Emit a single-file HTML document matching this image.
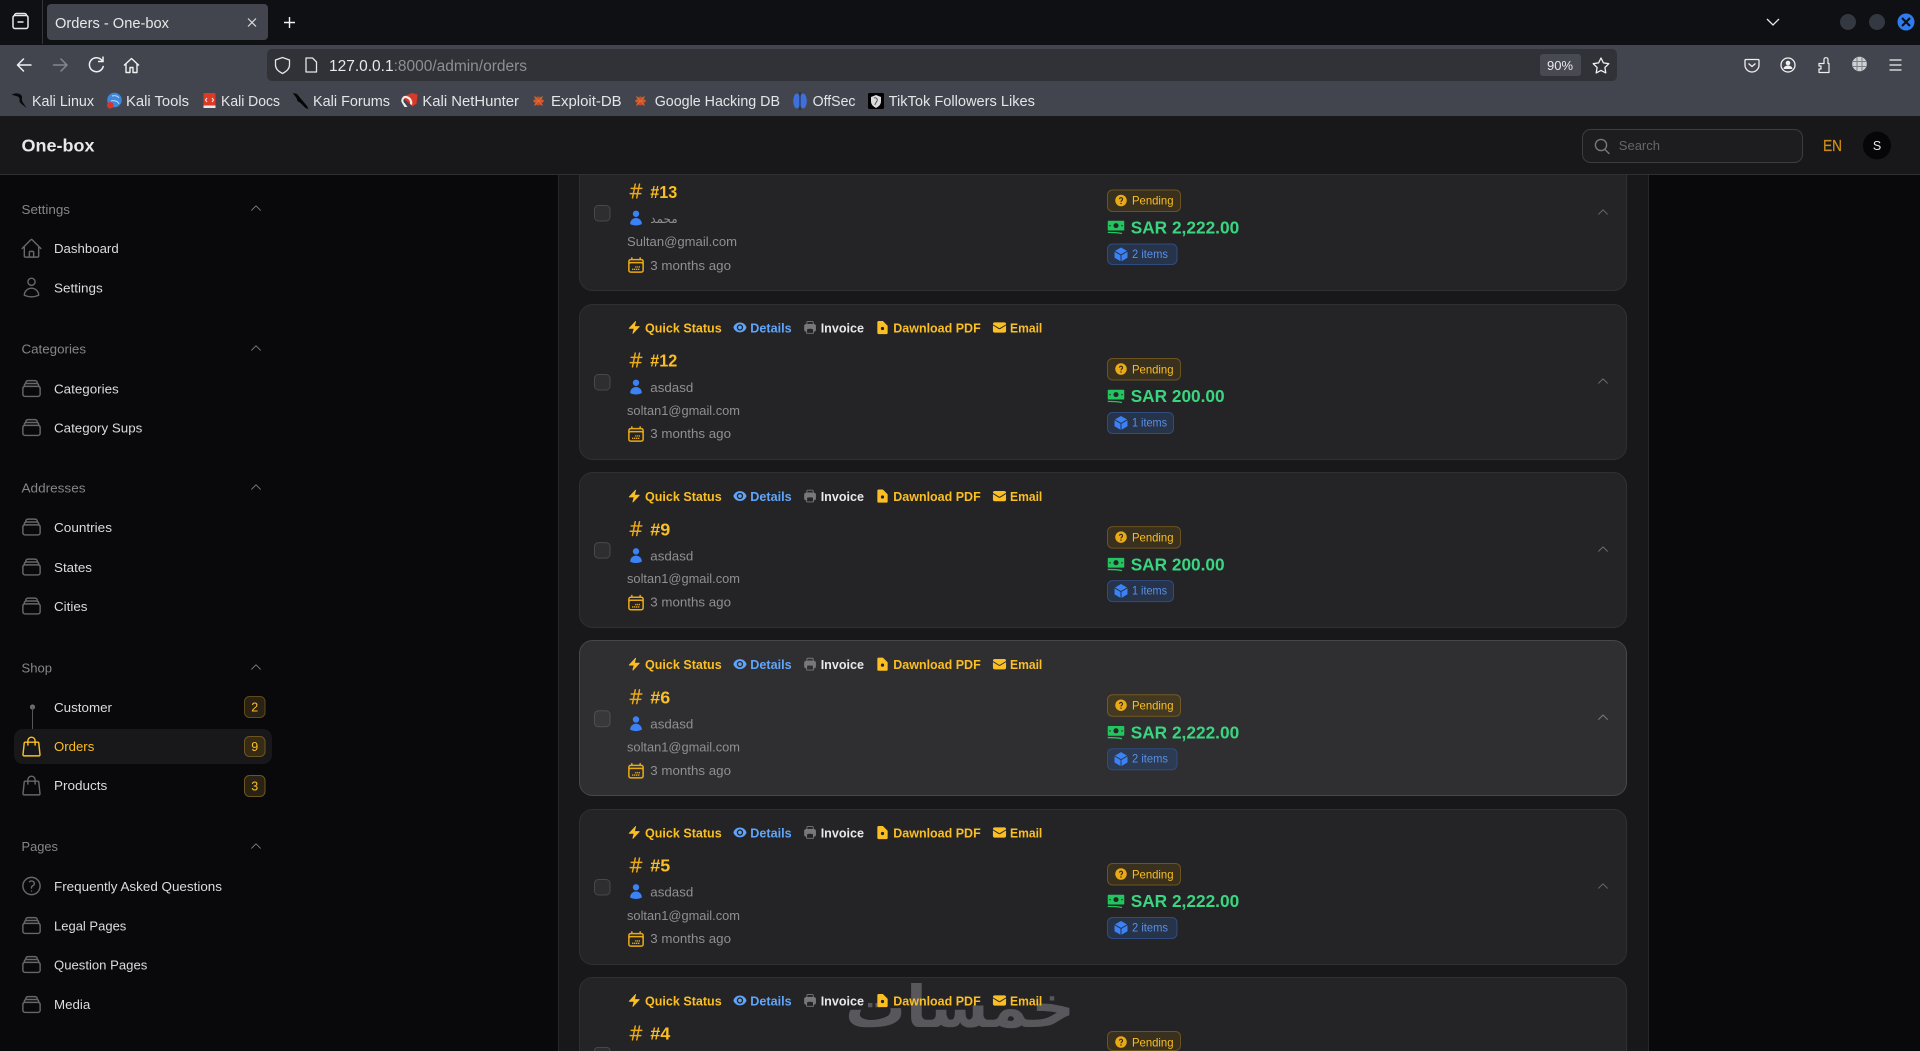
<!DOCTYPE html>
<html lang="en"><head><meta charset="utf-8"><title>Orders - One-box</title>
<style>
html,body{margin:0;padding:0;background:#09090b;width:1920px;height:1051px;overflow:hidden}
svg{display:block}
text{font-family:"Liberation Sans","DejaVu Sans",sans-serif}
.b{font-size:15px;fill:#e4e5e8}
.n{font-size:13px;fill:#dcdcde}
.h{font-size:13px;fill:#85858a}
.ac{font-size:13px;font-weight:bold}
.am{fill:#fbbf24}.bl{fill:#60a5fa}.wh{fill:#e8e8ea}
.id{font-size:17.5px;font-weight:bold;fill:#fbbf24}
.g{font-size:13px;fill:#8f8f94}
.p{font-size:12px;fill:#fbbf24}
.pr{font-size:17.5px;font-weight:bold;fill:#3ad67f}
.i{font-size:12px;fill:#5b8fe6}
</style></head><body>
<svg width="1920" height="1051" viewBox="0 0 1920 1051" xmlns="http://www.w3.org/2000/svg">
<defs>
<symbol id="home" viewBox="0 0 24 24"><path d="M2.25 12l8.954-8.955a1.126 1.126 0 011.591 0L21.75 12M4.5 9.75v10.125c0 .621.504 1.125 1.125 1.125H9.75v-4.875c0-.621.504-1.125 1.125-1.125h2.25c.621 0 1.125.504 1.125 1.125V21h4.125c.621 0 1.125-.504 1.125-1.125V9.75M8.25 21h8.25" fill="none" stroke="currentColor" stroke-width="1.5" stroke-linecap="round" stroke-linejoin="round"/></symbol>
<symbol id="user" viewBox="0 0 24 24"><path d="M15.75 6a3.75 3.75 0 11-7.5 0 3.75 3.75 0 017.5 0zM4.501 20.118a7.5 7.5 0 0114.998 0A17.933 17.933 0 0112 21.75c-2.676 0-5.216-.584-7.499-1.632z" fill="none" stroke="currentColor" stroke-width="1.5" stroke-linecap="round" stroke-linejoin="round"/></symbol>
<symbol id="stack" viewBox="0 0 24 24"><path d="M6 6.878V6a2.25 2.25 0 012.25-2.25h7.5A2.25 2.25 0 0118 6v.878m-12 0c.235-.083.487-.128.75-.128h10.5c.263 0 .515.045.75.128m-12 0A2.251 2.251 0 004.5 9v.878m13.5-3A2.25 2.25 0 0119.5 9v.878m0 0a2.246 2.246 0 00-.75-.128H5.25c-.263 0-.515.045-.75.128m15 0A2.25 2.25 0 0121 12v6a2.25 2.25 0 01-2.25 2.25H5.25A2.25 2.25 0 013 18v-6c0-.98.626-1.813 1.5-2.122" fill="none" stroke="currentColor" stroke-width="1.5" stroke-linecap="round" stroke-linejoin="round"/></symbol>
<symbol id="bag" viewBox="0 0 24 24"><path d="M15.75 10.5V6a3.75 3.75 0 10-7.5 0v4.5m11.356-1.993l1.263 12c.07.665-.45 1.243-1.119 1.243H4.25a1.125 1.125 0 01-1.12-1.243l1.264-12A1.125 1.125 0 015.513 7.5h12.974c.576 0 1.059.435 1.119 1.007z" fill="none" stroke="currentColor" stroke-width="1.5" stroke-linecap="round" stroke-linejoin="round"/></symbol>
<symbol id="q" viewBox="0 0 24 24"><path d="M9.879 7.519c1.171-1.025 3.071-1.025 4.242 0 1.172 1.025 1.172 2.687 0 3.712-.203.179-.43.326-.67.442-.745.361-1.45.999-1.45 1.827v.75M21 12a9 9 0 11-18 0 9 9 0 0118 0zm-9 5.25h.008v.008H12v-.008z" fill="none" stroke="currentColor" stroke-width="1.5" stroke-linecap="round" stroke-linejoin="round"/></symbol>
<symbol id="chev" viewBox="0 0 24 24"><path d="M4.5 15.75l7.5-7.5 7.5 7.5" fill="none" stroke="currentColor" stroke-width="1.8" stroke-linecap="round" stroke-linejoin="round"/></symbol>
<symbol id="bolt" viewBox="0 0 24 24"><path fill="#fbbf24" d="M14.615 1.595a.75.75 0 01.359.852L12.982 9.75h7.268a.75.75 0 01.548 1.262l-10.5 11.25a.75.75 0 01-1.272-.71l1.992-7.302H3.75a.75.75 0 01-.548-1.262l10.5-11.25a.75.75 0 01.913-.143z"/></symbol>
<symbol id="eye" viewBox="0 0 24 24"><path fill="#60a5fa" d="M12 15a3 3 0 100-6 3 3 0 000 6z"/><path fill="#60a5fa" fill-rule="evenodd" d="M1.323 11.447C2.811 6.976 7.028 3.75 12.001 3.75c4.97 0 9.185 3.223 10.675 7.69.12.362.12.752 0 1.113-1.487 4.471-5.705 7.697-10.677 7.697-4.97 0-9.186-3.223-10.675-7.69a1.762 1.762 0 010-1.113zM17.25 12a5.25 5.25 0 11-10.5 0 5.25 5.25 0 0110.5 0z"/></symbol>
<symbol id="print" viewBox="0 0 24 24"><path fill="#77777c" fill-rule="evenodd" d="M7.875 1.5C6.839 1.5 6 2.34 6 3.375v2.99c-.426.053-.851.11-1.274.174-1.454.218-2.476 1.483-2.476 2.917v6.294a3 3 0 003 3h.27l-.155 1.705A1.875 1.875 0 007.232 22.5h9.536a1.875 1.875 0 001.867-2.045l-.155-1.705h.27a3 3 0 003-3V9.456c0-1.434-1.022-2.7-2.476-2.917A48.716 48.716 0 0018 6.366V3.375c0-1.036-.84-1.875-1.875-1.875h-8.25zM16.5 6.205v-2.83A.375.375 0 0016.125 3h-8.25a.375.375 0 00-.375.375v2.83a49.353 49.353 0 019 0zm-.217 8.265c.178.018.317.16.333.337l.526 5.784a.375.375 0 01-.374.409H7.232a.375.375 0 01-.374-.409l.526-5.784a.373.373 0 01.333-.337 41.741 41.741 0 018.566 0z"/></symbol>
<symbol id="doc" viewBox="0 0 24 24"><path fill="#fbbf24" d="M5.625 1.5H12.6l7.65 7.65v12.1c0 .6-.9 1.25-1.875 1.25H5.625a1.875 1.875 0 01-1.875-1.875V3.375c0-1.036.84-1.875 1.875-1.875z"/><circle cx="12" cy="13.500" r="2.600" fill="#242427"/></symbol>
<symbol id="mail" viewBox="0 0 24 24"><path fill="#fbbf24" d="M1.5 8.67v8.58a3 3 0 003 3h15a3 3 0 003-3V8.67l-8.928 5.493a3 3 0 01-3.144 0L1.5 8.67z"/><path fill="#fbbf24" d="M22.5 6.908V6.75a3 3 0 00-3-3h-15a3 3 0 00-3 3v.158l9.714 5.978a1.5 1.5 0 001.572 0L22.5 6.908z"/></symbol>
<symbol id="hash" viewBox="0 0 24 24"><path d="M5.25 8.25h15m-16.5 7.5h15m-1.8-13.5l-3.9 19.5m-2.1-19.5l-3.9 19.5" fill="none" stroke="#eaa916" stroke-width="2.100" stroke-linecap="round"/></symbol>
<symbol id="person" viewBox="0 0 24 24"><path fill="#3b82f6" d="M7.5 6a4.5 4.5 0 119 0 4.5 4.5 0 01-9 0zM3.751 20.105a8.25 8.25 0 0116.498 0 .75.75 0 01-.437.695A18.683 18.683 0 0112 22.5c-2.786 0-5.433-.608-7.812-1.7a.75.75 0 01-.437-.695z"/></symbol>
<symbol id="cal" viewBox="0 0 24 24"><path d="M6.75 3v2.25M17.25 3v2.25M3 18.75V7.5a2.25 2.25 0 012.25-2.25h13.5A2.25 2.25 0 0121 7.5v11.25m-18 0A2.25 2.25 0 005.25 21h13.5A2.25 2.25 0 0021 18.75m-18 0v-7.5A2.25 2.25 0 015.25 9h13.5A2.25 2.25 0 0121 11.25v7.5" fill="none" stroke="#eaa916" stroke-width="1.900" stroke-linecap="round"/><path d="M7 17.500h10M11 14.500h6" stroke="#eaa916" stroke-width="1.700" stroke-dasharray="1.600 .8"/></symbol>
<symbol id="money" viewBox="0 0 24 24"><rect x="1" y="3" width="22" height="13" rx="1" fill="#22c55e"/><circle cx="12" cy="9.500" r="3.400" fill="#242427"/><circle cx="4" cy="9.500" r="1" fill="#242427"/><circle cx="20" cy="9.500" r="1" fill="#242427"/><path d="M1 18.500c7 0 14 .5 19 1.500" stroke="#22c55e" stroke-width="1.800" fill="none"/></symbol>
<symbol id="cube" viewBox="0 0 24 24"><path fill="#3b82f6" d="M12.378 1.602a.75.75 0 00-.756 0L3 6.632l9 5.25 9-5.25-8.622-5.03zM21.75 7.93l-9 5.25v9l8.628-5.032a.75.75 0 00.372-.648V7.93zM11.25 22.18v-9l-9-5.25v8.57a.75.75 0 00.372.648l8.628 5.033z"/></symbol>
<symbol id="qs" viewBox="0 0 24 24"><circle cx="12" cy="12" r="11.500" fill="#eaa916"/><path d="M9 9.300a3 3 0 115 2.300c-1.200.9-2 1.400-2 2.900" fill="none" stroke="#33291a" stroke-width="2.300"/><circle cx="12" cy="18" r="1.400" fill="#33291a"/></symbol>
</defs>

<!-- page -->
<rect width="1920" height="1051" fill="#09090b"/>
<rect x="558" y="116" width="1090" height="935" fill="#18181b"/>
<path d="M558.5 175V1051M1648.500 175V1051" stroke="#27272a"/>

<!-- cards -->
<g transform="translate(0,135)">
<rect x="579.500" y=".5" width="1047" height="155" rx="13" fill="#242427" stroke="#303033"/>
<use href="#hash" x="627.500" y="47.500" width="17" height="17"/><text class="id" x="650.300" y="63" textLength="27" lengthAdjust="spacingAndGlyphs">#13</text>
<use href="#person" x="627.500" y="74.500" width="17" height="17"/><text class="g" x="650.300" y="88" style="font-family:'DejaVu Sans',sans-serif;font-size:12px">محمد</text>
<text class="g" x="627" y="111" textLength="110" lengthAdjust="spacingAndGlyphs">Sultan@gmail.com</text>
<use href="#cal" x="626.500" y="120.500" width="19" height="19"/><text class="g" x="650.300" y="135" textLength="80.700" lengthAdjust="spacingAndGlyphs">3 months ago</text>
<rect x="594.500" y="70.500" width="15.500" height="15.500" rx="4" fill="#2e2e31" stroke="#48484c"/>
<rect x="1107.500" y="55" width="73" height="21.500" rx="5" fill="#39301d" stroke="#6b5320"/><use href="#qs" x="1115" y="59.500" width="12" height="12"/><text class="p" x="1132" y="69.500" textLength="41.500" lengthAdjust="spacingAndGlyphs">Pending</text>
<use href="#money" x="1107" y="83.500" width="18" height="18"/><text class="pr" x="1130.700" y="98.500" textLength="108.500" lengthAdjust="spacingAndGlyphs">SAR 2,222.00</text>
<rect x="1107.500" y="109" width="69.500" height="20.500" rx="5" fill="#263349" stroke="#2f4c80"/><use href="#cube" x="1113" y="111.500" width="16" height="16"/><text class="i" x="1132" y="123" textLength="36" lengthAdjust="spacingAndGlyphs">2 items</text>
<use href="#chev" x="1596" y="70" width="14" height="14" color="#69696e"/>
</g>

<g transform="translate(0,304)">
<rect x="579.500" y=".5" width="1047" height="155" rx="13" fill="#242427" stroke="#303033"/>
<use href="#bolt" x="627" y="16.200" width="14.500" height="14.500"/><text class="ac am" x="645" y="28.500" textLength="76.700" lengthAdjust="spacingAndGlyphs">Quick Status</text>
<use href="#eye" x="732.700" y="16.200" width="14.500" height="14.500"/><text class="ac bl" x="750.300" y="28.500" textLength="41.400" lengthAdjust="spacingAndGlyphs">Details</text>
<use href="#print" x="802.800" y="16.200" width="14.500" height="14.500"/><text class="ac wh" x="820.700" y="28.500" textLength="43.300" lengthAdjust="spacingAndGlyphs">Invoice</text>
<use href="#doc" x="875" y="16" width="15" height="15"/><text class="ac am" x="893.300" y="28.500" textLength="87.400" lengthAdjust="spacingAndGlyphs">Dawnload PDF</text>
<use href="#mail" x="992" y="16" width="15" height="15"/><text class="ac am" x="1010" y="28.500" textLength="32.300" lengthAdjust="spacingAndGlyphs">Email</text>
<use href="#hash" x="627.500" y="47.500" width="17" height="17"/><text class="id" x="650.300" y="62.700" textLength="27" lengthAdjust="spacingAndGlyphs">#12</text>
<use href="#person" x="627.500" y="74.500" width="17" height="17"/><text class="g" x="650.300" y="88" textLength="43" lengthAdjust="spacingAndGlyphs">asdasd</text>
<text class="g" x="627" y="111" textLength="113" lengthAdjust="spacingAndGlyphs">soltan1@gmail.com</text>
<use href="#cal" x="626.500" y="120.500" width="19" height="19"/><text class="g" x="650.300" y="134" textLength="80.700" lengthAdjust="spacingAndGlyphs">3 months ago</text>
<rect x="594.500" y="70.500" width="15.500" height="15.500" rx="4" fill="#2e2e31" stroke="#48484c"/>
<rect x="1107.500" y="54.500" width="73" height="21.500" rx="5" fill="#39301d" stroke="#6b5320"/><use href="#qs" x="1115" y="59" width="12" height="12"/><text class="p" x="1132" y="69.300" textLength="41.500" lengthAdjust="spacingAndGlyphs">Pending</text>
<use href="#money" x="1107" y="83.500" width="18" height="18"/><text class="pr" x="1130.700" y="98" textLength="93.900" lengthAdjust="spacingAndGlyphs">SAR 200.00</text>
<rect x="1107.500" y="108.500" width="66" height="21" rx="5" fill="#263349" stroke="#2f4c80"/><use href="#cube" x="1113" y="111" width="16" height="16"/><text class="i" x="1132" y="122.300" textLength="35" lengthAdjust="spacingAndGlyphs">1 items</text>
<use href="#chev" x="1596" y="70" width="14" height="14" color="#69696e"/>
</g>

<g transform="translate(0,472)">
<rect x="579.500" y=".5" width="1047" height="155" rx="13" fill="#242427" stroke="#303033"/>
<g transform="translate(0,.6)">
<use href="#bolt" x="627" y="16.200" width="14.500" height="14.500"/><text class="ac am" x="645" y="28.500" textLength="76.700" lengthAdjust="spacingAndGlyphs">Quick Status</text>
<use href="#eye" x="732.700" y="16.200" width="14.500" height="14.500"/><text class="ac bl" x="750.300" y="28.500" textLength="41.400" lengthAdjust="spacingAndGlyphs">Details</text>
<use href="#print" x="802.800" y="16.200" width="14.500" height="14.500"/><text class="ac wh" x="820.700" y="28.500" textLength="43.300" lengthAdjust="spacingAndGlyphs">Invoice</text>
<use href="#doc" x="875" y="16" width="15" height="15"/><text class="ac am" x="893.300" y="28.500" textLength="87.400" lengthAdjust="spacingAndGlyphs">Dawnload PDF</text>
<use href="#mail" x="992" y="16" width="15" height="15"/><text class="ac am" x="1010" y="28.500" textLength="32.300" lengthAdjust="spacingAndGlyphs">Email</text>
<use href="#hash" x="627.500" y="47.500" width="17" height="17"/><text class="id" x="650.300" y="62.700" textLength="20" lengthAdjust="spacingAndGlyphs">#9</text>
<use href="#person" x="627.500" y="74.500" width="17" height="17"/><text class="g" x="650.300" y="87.700" textLength="43" lengthAdjust="spacingAndGlyphs">asdasd</text>
<text class="g" x="627" y="110.500" textLength="113" lengthAdjust="spacingAndGlyphs">soltan1@gmail.com</text>
<use href="#cal" x="626.500" y="120.500" width="19" height="19"/><text class="g" x="650.300" y="133.700" textLength="80.700" lengthAdjust="spacingAndGlyphs">3 months ago</text>
<rect x="594.500" y="70" width="15.500" height="15.500" rx="4" fill="#2e2e31" stroke="#48484c"/>
<rect x="1107.500" y="54" width="73" height="21.500" rx="5" fill="#39301d" stroke="#6b5320"/><use href="#qs" x="1115" y="58.500" width="12" height="12"/><text class="p" x="1132" y="69" textLength="41.500" lengthAdjust="spacingAndGlyphs">Pending</text>
<use href="#money" x="1107" y="83" width="18" height="18"/><text class="pr" x="1130.700" y="97.700" textLength="93.900" lengthAdjust="spacingAndGlyphs">SAR 200.00</text>
<rect x="1107.500" y="108" width="66" height="21" rx="5" fill="#263349" stroke="#2f4c80"/><use href="#cube" x="1113" y="110.500" width="16" height="16"/><text class="i" x="1132" y="122" textLength="35" lengthAdjust="spacingAndGlyphs">1 items</text>
<use href="#chev" x="1596" y="69.500" width="14" height="14" color="#69696e"/>
</g></g>

<g transform="translate(0,640)">
<rect x="579.500" y=".5" width="1047" height="155" rx="13" fill="#2f2f32" stroke="#47474b"/>
<g transform="translate(0,.7)">
<use href="#bolt" x="627" y="16.200" width="14.500" height="14.500"/><text class="ac am" x="645" y="28.500" textLength="76.700" lengthAdjust="spacingAndGlyphs">Quick Status</text>
<use href="#eye" x="732.700" y="16.200" width="14.500" height="14.500"/><text class="ac bl" x="750.300" y="28.500" textLength="41.400" lengthAdjust="spacingAndGlyphs">Details</text>
<use href="#print" x="802.800" y="16.200" width="14.500" height="14.500"/><text class="ac wh" x="820.700" y="28.500" textLength="43.300" lengthAdjust="spacingAndGlyphs">Invoice</text>
<use href="#doc" x="875" y="16" width="15" height="15"/><text class="ac am" x="893.300" y="28.500" textLength="87.400" lengthAdjust="spacingAndGlyphs">Dawnload PDF</text>
<use href="#mail" x="992" y="16" width="15" height="15"/><text class="ac am" x="1010" y="28.500" textLength="32.300" lengthAdjust="spacingAndGlyphs">Email</text>
<use href="#hash" x="627.500" y="47.500" width="17" height="17"/><text class="id" x="650.300" y="62.700" textLength="20" lengthAdjust="spacingAndGlyphs">#6</text>
<use href="#person" x="627.500" y="74.500" width="17" height="17"/><text class="g" x="650.300" y="87.700" textLength="43" lengthAdjust="spacingAndGlyphs">asdasd</text>
<text class="g" x="627" y="111" textLength="113" lengthAdjust="spacingAndGlyphs">soltan1@gmail.com</text>
<use href="#cal" x="626.500" y="120.500" width="19" height="19"/><text class="g" x="650.300" y="134.500" textLength="80.700" lengthAdjust="spacingAndGlyphs">3 months ago</text>
<rect x="594.500" y="70" width="15.500" height="16" rx="4" fill="#38383b" stroke="#4f4f53"/>
<rect x="1107.500" y="54" width="73" height="21.500" rx="5" fill="#433820" stroke="#735a22"/><use href="#qs" x="1115" y="58.500" width="12" height="12"/><text class="p" x="1132" y="69" textLength="41.500" lengthAdjust="spacingAndGlyphs">Pending</text>
<use href="#money" x="1107" y="83" width="18" height="18"/><text class="pr" x="1130.700" y="98" textLength="108.500" lengthAdjust="spacingAndGlyphs">SAR 2,222.00</text>
<rect x="1107.500" y="108" width="69.500" height="21" rx="5" fill="#2c3a52" stroke="#2f4c80"/><use href="#cube" x="1113" y="110.500" width="16" height="16"/><text class="i" x="1132" y="122" textLength="36" lengthAdjust="spacingAndGlyphs">2 items</text>
<use href="#chev" x="1596" y="69.500" width="14" height="14" color="#77777c"/>
</g></g>

<g transform="translate(0,809)">
<rect x="579.500" y=".5" width="1047" height="155" rx="13" fill="#242427" stroke="#303033"/>
<use href="#bolt" x="627" y="16.200" width="14.500" height="14.500"/><text class="ac am" x="645" y="28.500" textLength="76.700" lengthAdjust="spacingAndGlyphs">Quick Status</text>
<use href="#eye" x="732.700" y="16.200" width="14.500" height="14.500"/><text class="ac bl" x="750.300" y="28.500" textLength="41.400" lengthAdjust="spacingAndGlyphs">Details</text>
<use href="#print" x="802.800" y="16.200" width="14.500" height="14.500"/><text class="ac wh" x="820.700" y="28.500" textLength="43.300" lengthAdjust="spacingAndGlyphs">Invoice</text>
<use href="#doc" x="875" y="16" width="15" height="15"/><text class="ac am" x="893.300" y="28.500" textLength="87.400" lengthAdjust="spacingAndGlyphs">Dawnload PDF</text>
<use href="#mail" x="992" y="16" width="15" height="15"/><text class="ac am" x="1010" y="28.500" textLength="32.300" lengthAdjust="spacingAndGlyphs">Email</text>
<use href="#hash" x="627.500" y="47.500" width="17" height="17"/><text class="id" x="650.300" y="62.300" textLength="20" lengthAdjust="spacingAndGlyphs">#5</text>
<use href="#person" x="627.500" y="74" width="17" height="17"/><text class="g" x="650.300" y="87.500" textLength="43" lengthAdjust="spacingAndGlyphs">asdasd</text>
<text class="g" x="627" y="111" textLength="113" lengthAdjust="spacingAndGlyphs">soltan1@gmail.com</text>
<use href="#cal" x="626.500" y="120.500" width="19" height="19"/><text class="g" x="650.300" y="134" textLength="80.700" lengthAdjust="spacingAndGlyphs">3 months ago</text>
<rect x="594.500" y="70.500" width="15.500" height="15.500" rx="4" fill="#2e2e31" stroke="#48484c"/>
<rect x="1107.500" y="54.500" width="73" height="21.500" rx="5" fill="#39301d" stroke="#6b5320"/><use href="#qs" x="1115" y="59" width="12" height="12"/><text class="p" x="1132" y="69.300" textLength="41.500" lengthAdjust="spacingAndGlyphs">Pending</text>
<use href="#money" x="1107" y="83.500" width="18" height="18"/><text class="pr" x="1130.700" y="98" textLength="108.500" lengthAdjust="spacingAndGlyphs">SAR 2,222.00</text>
<rect x="1107.500" y="108.500" width="69.500" height="21" rx="5" fill="#263349" stroke="#2f4c80"/><use href="#cube" x="1113" y="111" width="16" height="16"/><text class="i" x="1132" y="122.300" textLength="36" lengthAdjust="spacingAndGlyphs">2 items</text>
<use href="#chev" x="1596" y="70" width="14" height="14" color="#69696e"/>
</g>

<g transform="translate(0,977)">
<path d="M579.500 74V13.500A13 13 0 01592.500 .5H1613.500A13 13 0 011626.500 13.500V74Z" fill="#242427"/>
<path d="M579.500 74V13.500A13 13 0 01592.500 .5H1613.500A13 13 0 011626.500 13.500V74" fill="none" stroke="#303033"/>
<!-- watermark -->
<text x="845" y="50" textLength="230" lengthAdjust="spacingAndGlyphs" style="font-family:'DejaVu Sans',sans-serif;font-size:58px;font-weight:bold" fill="#58585c">خمسات</text>
<use href="#bolt" x="627" y="16.200" width="14.500" height="14.500"/><text class="ac am" x="645" y="28.500" textLength="76.700" lengthAdjust="spacingAndGlyphs">Quick Status</text>
<use href="#eye" x="732.700" y="16.200" width="14.500" height="14.500"/><text class="ac bl" x="750.300" y="28.500" textLength="41.400" lengthAdjust="spacingAndGlyphs">Details</text>
<use href="#print" x="802.800" y="16.200" width="14.500" height="14.500"/><text class="ac wh" x="820.700" y="28.500" textLength="43.300" lengthAdjust="spacingAndGlyphs">Invoice</text>
<use href="#doc" x="875" y="16" width="15" height="15"/><text class="ac am" x="893.300" y="28.500" textLength="87.400" lengthAdjust="spacingAndGlyphs">Dawnload PDF</text>
<use href="#mail" x="992" y="16" width="15" height="15"/><text class="ac am" x="1010" y="28.500" textLength="32.300" lengthAdjust="spacingAndGlyphs">Email</text>
<use href="#hash" x="627.500" y="47.500" width="17" height="17"/><text class="id" x="650.300" y="62.700" textLength="20" lengthAdjust="spacingAndGlyphs">#4</text>
<path d="M594.500 74V73.500a3 3 0 013-3h9.500a3 3 0 013 3V74" fill="#2e2e31" stroke="#48484c"/>
<rect x="1107.500" y="54.500" width="73" height="19" rx="5" fill="#39301d" stroke="#6b5320"/><use href="#qs" x="1115" y="59" width="12" height="12"/><text class="p" x="1132" y="69.300" textLength="41.500" lengthAdjust="spacingAndGlyphs">Pending</text>
</g>

<!-- sidebar -->
<g>
<text class="h" x="21.500" y="214" textLength="48.500" lengthAdjust="spacingAndGlyphs">Settings</text><use href="#chev" x="249" y="201" width="14" height="14" color="#77777c"/>
<use href="#home" x="20" y="237" width="23" height="23" color="#66666b"/><text class="n" x="54" y="253" textLength="64.700" lengthAdjust="spacingAndGlyphs">Dashboard</text>
<use href="#user" x="20" y="276" width="23" height="23" color="#66666b"/><text class="n" x="54" y="292.500" textLength="48.700" lengthAdjust="spacingAndGlyphs">Settings</text>
<text class="h" x="21.500" y="353.500" textLength="64.500" lengthAdjust="spacingAndGlyphs">Categories</text><use href="#chev" x="249" y="341" width="14" height="14" color="#77777c"/>
<use href="#stack" x="20" y="377" width="23" height="23" color="#66666b"/><text class="n" x="54" y="393.500" textLength="64.700" lengthAdjust="spacingAndGlyphs">Categories</text>
<use href="#stack" x="20" y="416" width="23" height="23" color="#66666b"/><text class="n" x="54" y="432.500" textLength="88.300" lengthAdjust="spacingAndGlyphs">Category Sups</text>
<text class="h" x="21.500" y="492.500" textLength="64" lengthAdjust="spacingAndGlyphs">Addresses</text><use href="#chev" x="249" y="480" width="14" height="14" color="#77777c"/>
<use href="#stack" x="20" y="515.500" width="23" height="23" color="#66666b"/><text class="n" x="54" y="532" textLength="58" lengthAdjust="spacingAndGlyphs">Countries</text>
<use href="#stack" x="20" y="555.500" width="23" height="23" color="#66666b"/><text class="n" x="54" y="572" textLength="38" lengthAdjust="spacingAndGlyphs">States</text>
<use href="#stack" x="20" y="594.500" width="23" height="23" color="#66666b"/><text class="n" x="54" y="611" textLength="33.500" lengthAdjust="spacingAndGlyphs">Cities</text>
<text class="h" x="21.500" y="672.500" textLength="30.500" lengthAdjust="spacingAndGlyphs">Shop</text><use href="#chev" x="249" y="660" width="14" height="14" color="#77777c"/>
<circle cx="32.500" cy="707" r="2.600" fill="#6b6b70"/><path d="M32.500 707V729" stroke="#55555a"/>
<text class="n" x="54" y="712" textLength="58" lengthAdjust="spacingAndGlyphs">Customer</text>
<rect x="244.500" y="696.500" width="20.500" height="21" rx="5" fill="#2a2212" stroke="#5f4a1c"/><text x="254.700" y="711.500" text-anchor="middle" style="font-size:12.500px" fill="#fbbf24">2</text>
<rect x="14" y="729" width="258" height="35" rx="9" fill="#18181b"/>
<use href="#bag" x="20" y="735" width="23" height="23" color="#fbbf24"/><text class="n" x="54" y="751" textLength="40.300" lengthAdjust="spacingAndGlyphs" style="fill:#fbbf24">Orders</text>
<rect x="244.500" y="736.500" width="20.500" height="20" rx="5" fill="#362b14" stroke="#6e5520"/><text x="254.700" y="751" text-anchor="middle" style="font-size:12.500px" fill="#fbbf24">9</text>
<use href="#bag" x="20" y="774" width="23" height="23" color="#66666b"/><text class="n" x="54" y="790" textLength="53.300" lengthAdjust="spacingAndGlyphs">Products</text>
<rect x="244.500" y="775.500" width="20.500" height="21" rx="5" fill="#2a2212" stroke="#6e5520"/><text x="254.700" y="790.500" text-anchor="middle" style="font-size:12.500px" fill="#fbbf24">3</text>
<text class="h" x="21.500" y="851" textLength="36.500" lengthAdjust="spacingAndGlyphs">Pages</text><use href="#chev" x="249" y="839" width="14" height="14" color="#77777c"/>
<use href="#q" x="20" y="874.500" width="23" height="23" color="#66666b"/><text class="n" x="54" y="891" textLength="168" lengthAdjust="spacingAndGlyphs">Frequently Asked Questions</text>
<use href="#stack" x="20" y="914" width="23" height="23" color="#66666b"/><text class="n" x="54" y="930.500" textLength="72.300" lengthAdjust="spacingAndGlyphs">Legal Pages</text>
<use href="#stack" x="20" y="953" width="23" height="23" color="#66666b"/><text class="n" x="54" y="969.500" textLength="93.300" lengthAdjust="spacingAndGlyphs">Question Pages</text>
<use href="#stack" x="20" y="993" width="23" height="23" color="#66666b"/><text class="n" x="54" y="1009" textLength="36.300" lengthAdjust="spacingAndGlyphs">Media</text>
</g>

<!-- app header -->
<rect x="0" y="116" width="1920" height="58" fill="#18181b"/>
<rect x="0" y="174" width="1920" height="1" fill="#2e2e33"/>
<text x="21.500" y="151.500" textLength="73" lengthAdjust="spacingAndGlyphs" style="font-size:17.500px;font-weight:bold" fill="#e8e8ea">One-box</text>
<rect x="1582.500" y="129.500" width="220" height="33" rx="8" fill="#1d1d20" stroke="#3c3c41"/>
<circle cx="1601" cy="145" r="5.600" fill="none" stroke="#77777c" stroke-width="1.400"/><path d="M1605 149.500l4 4" stroke="#77777c" stroke-width="1.400" stroke-linecap="round"/>
<text x="1618.800" y="150" textLength="41.200" lengthAdjust="spacingAndGlyphs" style="font-size:13px" fill="#66666b">Search</text>
<text x="1823" y="151" textLength="19" lengthAdjust="spacingAndGlyphs" style="font-size:16px" fill="#c88a1c" stroke="#c88a1c" stroke-width=".35">EN</text>
<circle cx="1877" cy="145.500" r="14" fill="#060608"/><text x="1877" y="150" text-anchor="middle" style="font-size:12.500px" fill="#e8e8ea">S</text>

<!-- browser: tab strip -->
<rect width="1920" height="45" fill="#0e1014"/>
<path d="M42.500 0V44" stroke="#33353b"/>
<rect x="13" y="15.500" width="15" height="13" rx="2" fill="none" stroke="#e8e8ea" stroke-width="1.500"/><path d="M14.500 15.500a2 2 0 012-2h8a2 2 0 012 2" fill="none" stroke="#e8e8ea" stroke-width="1.500"/><path d="M17.500 22h6" stroke="#e8e8ea" stroke-width="1.500"/>
<rect x="47" y="4" width="221" height="36" rx="4" fill="#42454d"/>
<text x="55" y="28" textLength="114" lengthAdjust="spacingAndGlyphs" style="font-size:15px" fill="#e8e9ec">Orders - One-box</text>
<path d="M248 18.500l8 8M256 18.500l-8 8" stroke="#d8d9dc" stroke-width="1.200"/>
<path d="M289.500 17v11M284 22.500h11" stroke="#f0f0f2" stroke-width="1.400"/>
<path d="M1767 19l6 6 6-6" fill="none" stroke="#e8e8ea" stroke-width="1.300"/>
<circle cx="1848" cy="22" r="8" fill="#343841"/><circle cx="1877" cy="22" r="8" fill="#343841"/><circle cx="1906" cy="22" r="8.500" fill="#2f7bf0"/><path d="M1902 18l8 8M1910 18l-8 8" stroke="#0e1014" stroke-width="2.200"/>

<!-- browser: toolbar -->
<rect y="45" width="1920" height="71" fill="#42454d"/>
<rect x="267" y="49" width="1350" height="32" rx="5" fill="#303237"/>
<path d="M17.500 65H31M17.500 65l6-6M17.500 65l6 6" fill="none" stroke="#f0f0f2" stroke-width="1.500" stroke-linecap="round"/>
<path d="M53.500 65H67M67 65l-6-6M67 65l-6 6" fill="none" stroke="#84868c" stroke-width="1.500" stroke-linecap="round"/>
<path d="M102 60.500a7 7 0 10 1.200 6" fill="none" stroke="#f0f0f2" stroke-width="1.500" stroke-linecap="round"/><path d="M103 56.500v5h-5" fill="none" stroke="#f0f0f2" stroke-width="1.500"/>
<path d="M124 65.500l7.500-7 7.500 7M126 64v8.500h4v-5h3v5h4V64" fill="none" stroke="#f0f0f2" stroke-width="1.400" stroke-linejoin="round"/>
<path d="M282.500 57.500l7 2.500v5c0 4-3 6.500-7 8.500-4-2-7-4.500-7-8.500v-5z" fill="none" stroke="#e4e5e8" stroke-width="1.300" stroke-linejoin="round"/>
<path d="M306 58h6.500l4 4v10h-10.500z" fill="none" stroke="#e4e5e8" stroke-width="1.300" stroke-linejoin="round"/>
<text x="329" y="71" style="font-size:15.500px" fill="#e8e9ec" textLength="198" lengthAdjust="spacingAndGlyphs">127.0.0.1<tspan fill="#8d8f95">:8000/admin/orders</tspan></text>
<rect x="1540" y="54" width="41" height="22" rx="3" fill="#484a51"/>
<text x="1547" y="70" textLength="26" lengthAdjust="spacingAndGlyphs" style="font-size:13px" fill="#e8e9ec">90%</text>
<path d="M1601 58l2.400 4.900 5.400.8-3.900 3.800.9 5.400-4.800-2.500-4.800 2.500.9-5.400-3.900-3.800 5.400-.8z" fill="none" stroke="#f0f0f2" stroke-width="1.300" stroke-linejoin="round"/>
<path d="M1746 59.500h12a1 1 0 011 1v4.500a7 7 0 01-14 0v-4.500a1 1 0 011-1z" fill="none" stroke="#f0f0f2" stroke-width="1.300"/><path d="M1748.500 63.500l3.500 3 3.500-3" fill="none" stroke="#f0f0f2" stroke-width="1.300"/>
<circle cx="1788" cy="65" r="7" fill="none" stroke="#f0f0f2" stroke-width="1.300"/><circle cx="1788" cy="63" r="2.300" fill="#f0f0f2"/><path d="M1783.500 69a4.500 3.500 0 019 0z" fill="#f0f0f2"/>
<path d="M1819 63.500h5v-4a1.800 1.800 0 011.800-1.800h.4a1.800 1.800 0 011.800 1.800v4h1v9h-10v-3.500h2v-3h-2z" fill="none" stroke="#f0f0f2" stroke-width="1.200" stroke-linejoin="round"/>
<circle cx="1859.500" cy="64" r="7.300" fill="#cfd0d3"/><path d="M1852 61.500h15M1852 66.500h15M1857 56.800v14.400M1862 56.800v14.400" stroke="#7e8087" stroke-width="1"/>
<path d="M1889.500 60h12M1889.500 65h12M1889.500 70h12" stroke="#f0f0f2" stroke-width="1.300"/>

<!-- bookmarks -->
<path d="M12 94.500c3-1.500 7-1.500 9 .5 2 2 .5 3.500 1 5.500.6 2 2.500 4 4.500 7.500-2.500-2-5-4-6.500-5.500-1-1.500 0-3.500-1-5-2-2-4-1.500-7.500-3z" fill="#0a0a0c"/>
<text class="b" x="32" y="106" textLength="62" lengthAdjust="spacingAndGlyphs">Kali Linux</text>
<circle cx="114.500" cy="100" r="7.300" fill="#3f87db"/><path d="M112 96c3-1 6 0 7 2M111 101c3-1 7 0 8 3" stroke="#bcd8f5" fill="none"/><rect x="107" y="102" width="6.500" height="6.500" rx="3" fill="#d9342b"/>
<text class="b" x="126" y="106" textLength="63" lengthAdjust="spacingAndGlyphs">Kali Tools</text>
<rect x="203.500" y="93" width="12" height="15" rx="1" fill="#dd3a26"/><rect x="203.500" y="105.500" width="12" height="2.500" fill="#e8e8ea"/><path d="M207 98l-1.500 2 1.500 2M212 98l1.500 2-1.500 2" stroke="#fff" fill="none" stroke-width="1"/>
<text class="b" x="221" y="106" textLength="59" lengthAdjust="spacingAndGlyphs">Kali Docs</text>
<path d="M293 93l4 1 5 6 5 6 1.500 3-3-1-5-5-3-2-1-3-3-4z" fill="#050506"/>
<text class="b" x="313" y="106" textLength="77" lengthAdjust="spacingAndGlyphs">Kali Forums</text>
<path d="M402 97l10-4 5.500 1.500-1 9-4 3z" fill="#d83a2a"/><path d="M404 96a7 7 0 018 9l-2-1a5 5 0 00-5-6 3 3 0 00-.5 5l3 4h-3l-3-5c-.5-2 0-4 2.500-6z" fill="#eceded"/>
<text class="b" x="422.400" y="106" textLength="96.600" lengthAdjust="spacingAndGlyphs">Kali NetHunter</text>
<circle cx="538.500" cy="101" r="4.500" fill="#c9482a"/><path d="M534.500 96.500l8 9M542.500 96.500l-8 9M533 101h11" stroke="#d8702a" stroke-width="1"/>
<text class="b" x="551" y="106" textLength="70.600" lengthAdjust="spacingAndGlyphs">Exploit-DB</text>
<circle cx="640.500" cy="101" r="4.500" fill="#c9482a"/><path d="M636.500 96.500l8 9M644.500 96.500l-8 9M635 101h11" stroke="#d8702a" stroke-width="1"/>
<text class="b" x="654.700" y="106" textLength="125.300" lengthAdjust="spacingAndGlyphs">Google Hacking DB</text>
<ellipse cx="796.800" cy="101" rx="3.600" ry="7.500" fill="#3f6fd8"/><ellipse cx="803.200" cy="101" rx="3.600" ry="7.500" fill="#3f6fd8"/><path d="M800 92v18" stroke="#22293a" stroke-width="1"/>
<text class="b" x="812.600" y="106" textLength="42.900" lengthAdjust="spacingAndGlyphs">OffSec</text>
<rect x="868" y="93" width="16" height="16" rx="1.500" fill="#000"/><path d="M876 95l5 2v4c0 4-2.500 5.500-5 7-2.500-1.500-5-3-5-7v-4z" fill="#dcdcde"/><path d="M874 98c2-1 4 1 3 3s-2 2-2 4" stroke="#555" fill="none"/>
<text class="b" x="888.600" y="106" textLength="146.400" lengthAdjust="spacingAndGlyphs">TikTok Followers Likes</text>
</svg>
</body></html>
